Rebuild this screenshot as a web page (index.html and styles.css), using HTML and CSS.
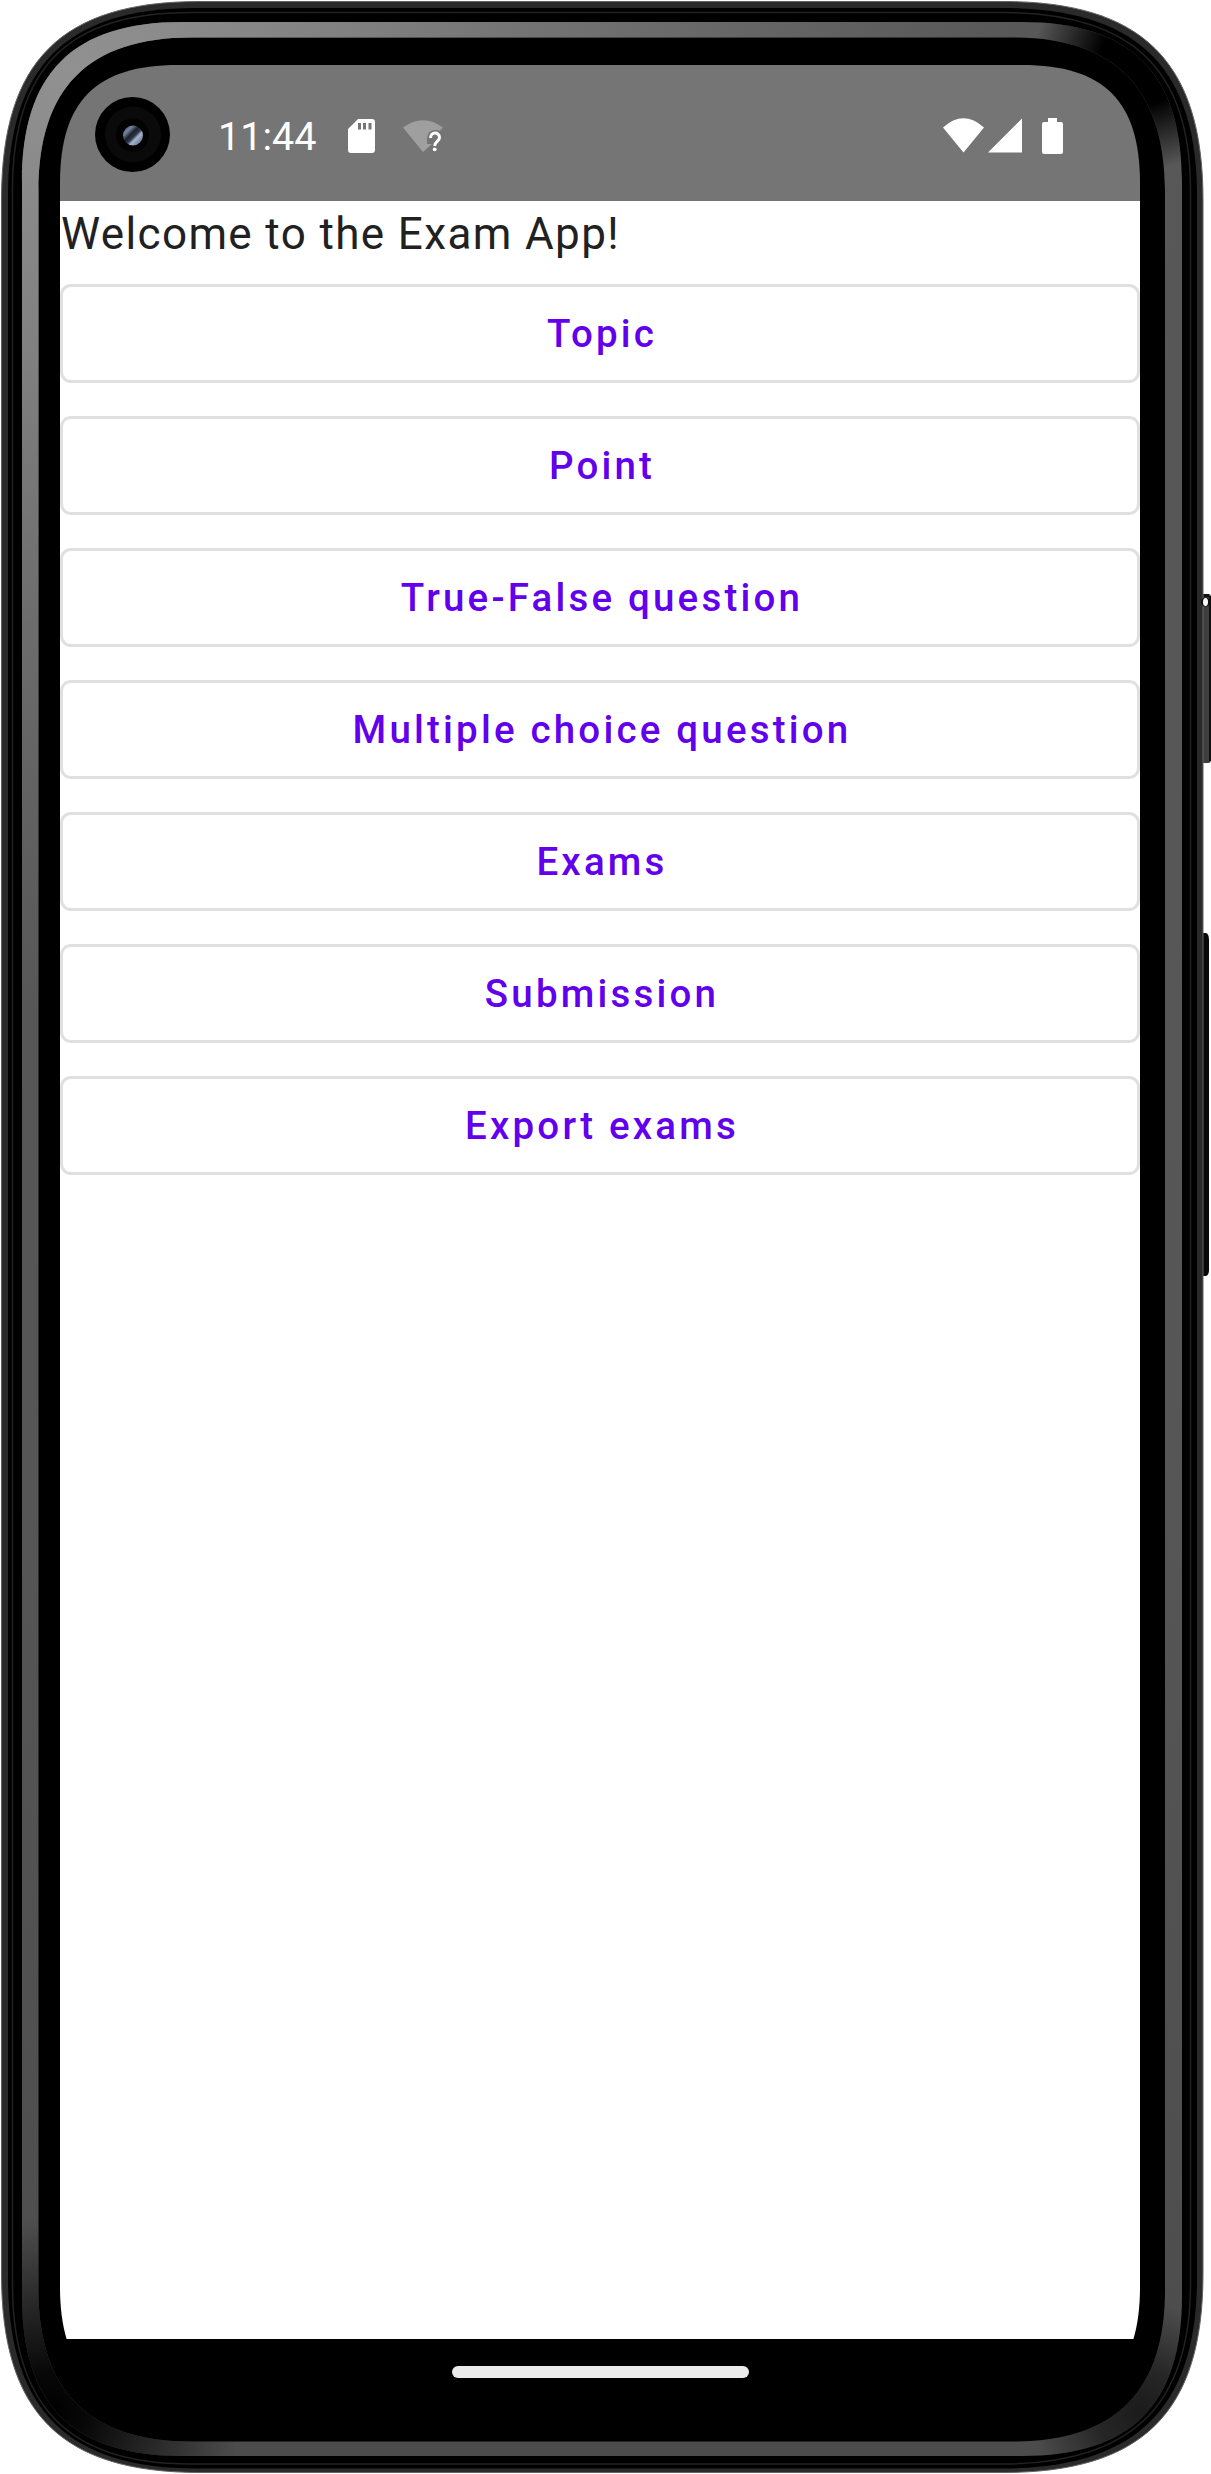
FILE: index.html
```html
<!DOCTYPE html>
<html lang="en">
<head>
<meta charset="utf-8">
<title>Exam App</title>
<link rel="stylesheet" href="styles.css">
</head>
<body>
<div class="phone">
  <svg class="frame" width="1211" height="2474" viewBox="0 0 1211 2474" aria-hidden="true">
    <defs>
      <linearGradient id="band" x1="0" y1="0" x2="0" y2="1">
        <stop offset="0" stop-color="#585858"/><stop offset=".6" stop-color="#565656"/><stop offset="1" stop-color="#4c4c4c"/>
      </linearGradient>
      <radialGradient id="light" gradientUnits="userSpaceOnUse" cx="70" cy="70" r="950">
        <stop offset="0" stop-color="#919191"/><stop offset=".3" stop-color="#858585" stop-opacity=".9"/><stop offset="1" stop-color="#777" stop-opacity="0"/>
      </radialGradient>
      <radialGradient id="shadeTR" gradientUnits="userSpaceOnUse" cx="1144" cy="60" r="110">
        <stop offset="0" stop-color="#000"/><stop offset=".4" stop-color="#000"/><stop offset="1" stop-color="#000" stop-opacity="0"/>
      </radialGradient>
      <radialGradient id="shadeBL" gradientUnits="userSpaceOnUse" cx="50" cy="2410" r="190">
        <stop offset="0" stop-color="#000"/><stop offset=".2" stop-color="#000" stop-opacity=".9"/><stop offset="1" stop-color="#000" stop-opacity="0"/>
      </radialGradient>
      <radialGradient id="shadeBR" gradientUnits="userSpaceOnUse" cx="1140" cy="2412" r="110">
        <stop offset="0" stop-color="#000" stop-opacity=".65"/><stop offset=".4" stop-color="#000" stop-opacity=".5"/><stop offset="1" stop-color="#000" stop-opacity="0"/>
      </radialGradient>
      <path id="ring" fill-rule="evenodd" d="M22 182C22 73 73 22 182 22H1022C1131 22 1182 73 1182 182V2296C1182 2405 1131 2456 1022 2456H182C73 2456 22 2405 22 2296ZM38.500 192C38.500 89 87 37.500 192 37.500H1013C1116 37.500 1165 89 1165 192V2290C1165 2391 1116 2441.500 1013 2441.500H192C89 2441.500 38.500 2391 38.500 2290Z"/>
    </defs>
    <path fill="#3d3e3d" d="M1203 594H1208Q1211 594 1211 597V760Q1211 763 1208 763H1203Z"/>
    <path fill="#111" d="M1209 596H1211V761H1209ZM1203 594H1209V597H1203Z"/>
    <path fill="#080808" d="M1202 933H1206Q1209 934 1209 940V1270Q1209 1275 1206 1276H1202Z"/>
    <path fill="#292a29" stroke="#626462" stroke-width="1" d="M1.500 200C1.500 61 61 1.500 200 1.500H1003C1142 1.500 1203 61 1203 200V2274C1203 2413 1142 2472.500 1003 2472.500H200C61 2472.500 1.500 2413 1.500 2274Z"/>
    <circle cx="1205.500" cy="602" r="4.500" fill="#111"/><ellipse cx="1205.500" cy="602" rx="2.500" ry="4" fill="#f8f8f8"/>
    <path fill="#000" d="M8 196C8 66 66 8 196 8H1002C1136 8 1197 66 1197 196V2278C1197 2408 1136 2468.500 1002 2468.500H196C66 2468.500 8 2408 8 2278Z"/>
    <path fill="none" stroke="#222" stroke-width="1.500" d="M12.500 190C12.500 68 68 12.500 190 12.500H1002C1131 12.500 1190.500 68 1190.500 190V2284C1190.500 2406 1131 2464 1002 2464H190C68 2464 12.500 2406 12.500 2284Z"/>
    <use href="#ring" fill="url(#band)"/>
    <use href="#ring" fill="url(#light)"/>
    <use href="#ring" fill="url(#shadeTR)"/>
    <use href="#ring" fill="url(#shadeBL)"/>
    <use href="#ring" fill="url(#shadeBR)"/>
  </svg>
  <main class="screen">
    <header class="status">
      <svg class="camera" width="75" height="75" viewBox="0 0 75 75" aria-hidden="true">
        <defs><linearGradient id="lens" x1="0" y1="0" x2="1" y2="1"><stop offset="0" stop-color="#39404f"/><stop offset=".25" stop-color="#7484a0"/><stop offset=".42" stop-color="#1b202b"/><stop offset=".55" stop-color="#303747"/><stop offset=".65" stop-color="#a3b5d1"/><stop offset="1" stop-color="#4b5468"/></linearGradient></defs>
        <circle cx="37.500" cy="37.500" r="37.500"/><circle cx="38" cy="37.500" r="28" fill="#0a0a0a"/><circle cx="37.500" cy="38" r="16.500" fill="#020202"/><circle cx="38" cy="38.500" r="10" fill="url(#lens)"/>
      </svg>
      <span class="clock">11:44</span>
      <svg class="sd" width="27" height="34" viewBox="0 0 27 34" aria-hidden="true"><path fill="#fff" fill-rule="evenodd" d="M10 0H24Q27 0 27 3V31Q27 34 24 34H3Q0 34 0 31V10ZM10 4V10.500H13V4ZM15 4V10.500H18V4ZM20.500 4V10.500H23.500V4Z"/></svg>
      <svg class="weak" width="40" height="34" viewBox="0 0 40 34" aria-hidden="true"><path fill="#9f9f9f" d="M0 7.500Q20 -7 40 7.500L36.500 11C31 9 26 12 25.500 17H30V23L20 32Z"/><path fill="#757575" d="M24 19Q24 10 33 10Q39 10 40 17V34H29V24L24 24Z"/><path fill="none" stroke="#fff" stroke-width="3" d="M27.500 18C27.500 11.500 36.500 11.500 36.500 17.500C36.500 21.500 31.700 21.500 31.700 26"/><circle cx="31.700" cy="29.300" r="1.900" fill="#fff"/></svg>
      <svg class="signals" width="121" height="36" viewBox="0 0 121 36" aria-hidden="true"><path fill="#fff" d="M0 9.500Q20.500 -9 41 9.500L20.500 34.500ZM45 34.500L79 .5V34.500ZM105 0H114V4H118Q120 4 120 6V34Q120 36 118 36H101Q99 36 99 34V6Q99 4 101 4H105Z"/></svg>
    </header>
    <section class="content">
      <p class="welcome">Welcome to the Exam App!</p>
      <nav class="menu">
        <button class="item">Topic</button>
        <button class="item">Point</button>
        <button class="item">True-False question</button>
        <button class="item">Multiple choice question</button>
        <button class="item">Exams</button>
        <button class="item">Submission</button>
        <button class="item">Export exams</button>
      </nav>
    </section>
    <footer class="navbar"><span class="handle"></span></footer>
  </main>
</div>
</body>
</html>
```

FILE: styles.css
```css
* { box-sizing: border-box; }
body { margin: 0; background: #fff; font-family: Roboto, sans-serif; }
.phone { position: relative; z-index: 0; width: 1211px; height: 2474px; padding: 65px 71px 69px 60px; overflow: hidden; }
.frame { position: absolute; inset: 0; z-index: -1; }
.screen {
  display: flex; flex-direction: column; width: 1080px; height: 2340px; background: #000;
  clip-path: path("M0 118C0 36 36 0 118 0H962C1044 0 1080 36 1080 118V2222C1080 2304 1044 2340 962 2340H118C36 2340 0 2304 0 2222Z");
}
.status { display: flex; align-items: flex-start; height: 136px; background: #757575; color: #fff; padding: 32px 76px 0 35px; }
.camera { flex: none; }
.clock { width: 100px; margin: 17px 0 0 48px; font-size: 39.5px; line-height: 46px; white-space: nowrap; }
.sd { margin: 22px 0 0 30px; }
.weak { margin: 23px 0 0 28px; }
.signals { margin: 21px 0 0 auto; }
.content { flex: 1; background: #fff; }
.welcome { margin: 0; padding-left: 1px; font-size: 44px; line-height: 66px; letter-spacing: 1.375px; color: #212121; }
.menu { display: flex; flex-direction: column; gap: 33px; padding-top: 17px; }
.item {
  height: 99px; padding: 0 0 0 4px; border: 3px solid #e0e0e0; border-radius: 11px; background: #fff;
  font: 500 38.5px/44px Roboto, sans-serif; letter-spacing: 3.2px; color: #6200ee;
}
.navbar { display: flex; justify-content: center; height: 66px; padding-top: 27px; background: #000; }
.handle { width: 297px; height: 12px; border-radius: 6px; background: #ebebeb; }
```
